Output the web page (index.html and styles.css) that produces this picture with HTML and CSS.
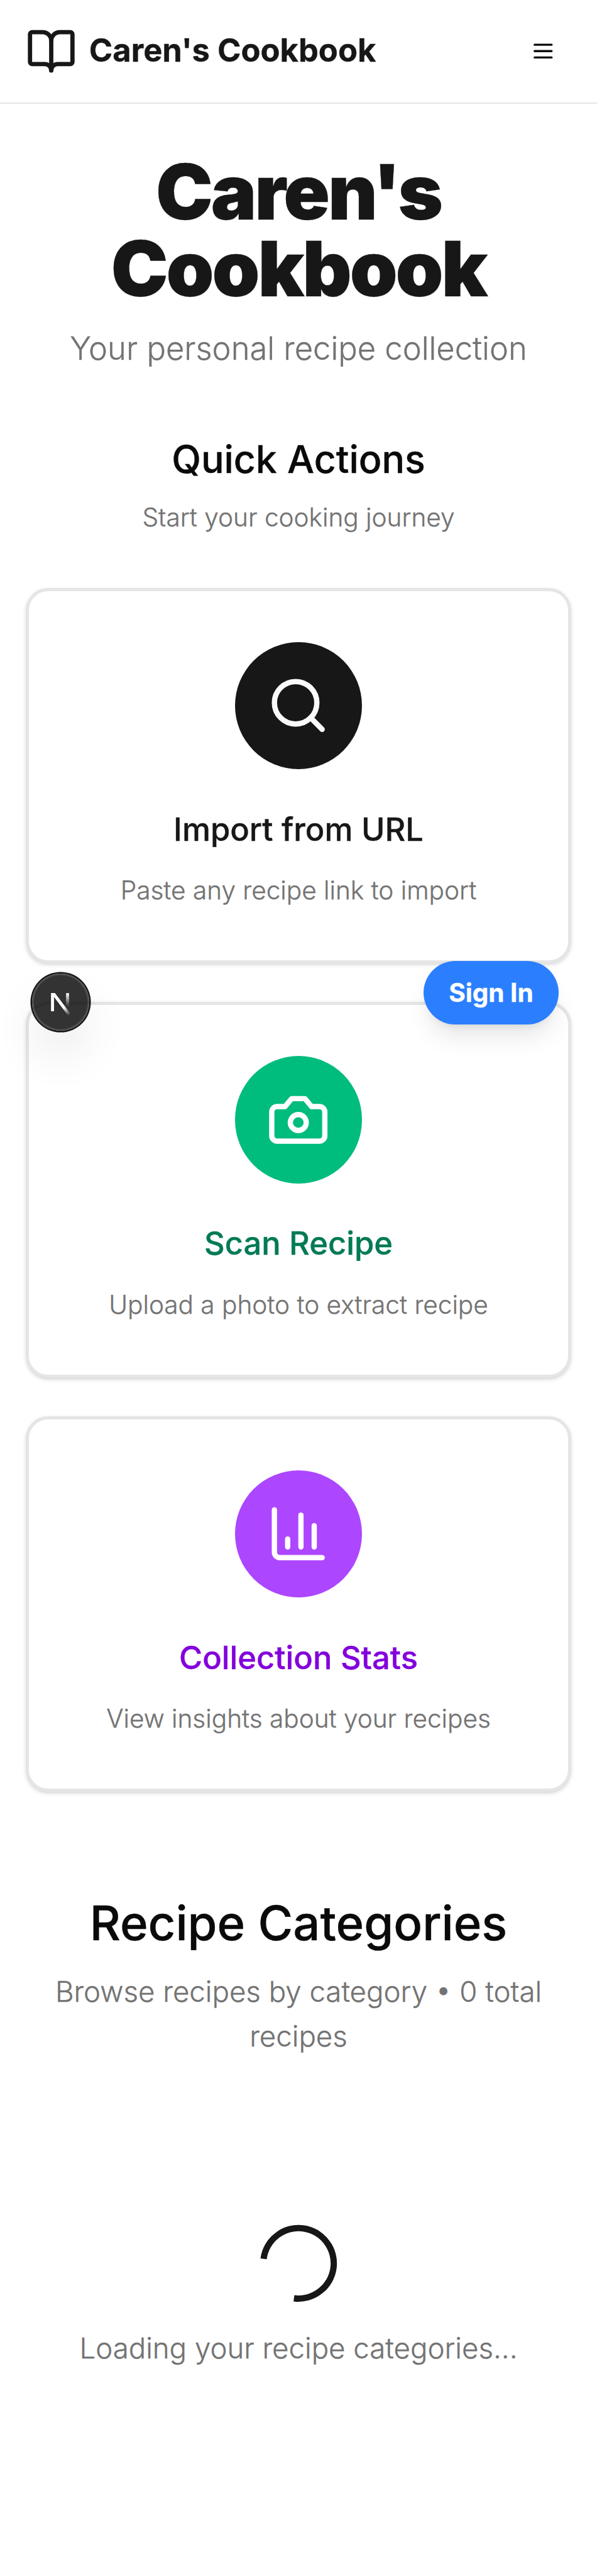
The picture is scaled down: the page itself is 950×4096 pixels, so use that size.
FILE: index.html
```html
<!DOCTYPE html>
<html lang="en">
<head>
<meta charset="utf-8">
<title>Caren's Cookbook</title>
<link rel="stylesheet" href="styles.css">
</head>
<body>
<header class="site-header">
  <a class="brand">
    <svg class="icon brand-icon" viewBox="0 0 24 24"><path d="M12 7v14"/><path d="M3 18a1 1 0 0 1-1-1V4a1 1 0 0 1 1-1h5a4 4 0 0 1 4 4 4 4 0 0 1 4-4h5a1 1 0 0 1 1 1v13a1 1 0 0 1-1 1h-6a3 3 0 0 0-3 3 3 3 0 0 0-3-3z"/></svg>
    <span class="brand-name">Caren's Cookbook</span>
  </a>
  <button class="menu-button" aria-label="Menu">
    <svg class="icon menu-icon" viewBox="0 0 24 24"><path d="M4 6h16M4 12h16M4 18h16"/></svg>
  </button>
</header>
<main class="content">
  <section class="hero">
    <h1>Caren's Cookbook</h1>
    <p>Your personal recipe collection</p>
  </section>
  <section class="quick">
    <h2>Quick Actions</h2>
    <p class="quick-note">Start your cooking journey</p>
    <div class="cards">
      <article class="card card-import">
        <div class="badge"><svg class="icon" viewBox="0 0 24 24"><path d="m21 21-4.34-4.34"/><circle cx="11" cy="11" r="8"/></svg></div>
        <h3>Import from URL</h3>
        <p>Paste any recipe link to import</p>
      </article>
      <article class="card card-scan">
        <div class="badge"><svg class="icon" viewBox="0 0 24 24"><path d="M14.5 4h-5L7 7H4a2 2 0 0 0-2 2v9a2 2 0 0 0 2 2h16a2 2 0 0 0 2-2V9a2 2 0 0 0-2-2h-3l-2.5-3z"/><circle cx="12" cy="13" r="3"/></svg></div>
        <h3>Scan Recipe</h3>
        <p>Upload a photo to extract recipe</p>
      </article>
      <article class="card card-stats">
        <div class="badge"><svg class="icon" viewBox="0 0 24 24"><path d="M3 3v16a2 2 0 0 0 2 2h16"/><path d="M18 17V9"/><path d="M13 17V5"/><path d="M8 17v-3"/></svg></div>
        <h3>Collection Stats</h3>
        <p>View insights about your recipes</p>
      </article>
    </div>
  </section>
  <section class="categories">
    <h2>Recipe Categories</h2>
    <p>Browse recipes by category • 0 total recipes</p>
    <div class="loading">
      <div class="spinner"></div>
      <p>Loading your recipe categories...</p>
    </div>
  </section>
</main>
<button class="sign-in">Sign In</button>
<div class="dev-badge">
  <svg viewBox="0 0 36 36" fill="none">
    <defs>
      <linearGradient id="diag" gradientUnits="userSpaceOnUse" x1="20" y1="21.3" x2="23.6" y2="26.05"><stop stop-color="#fff"/><stop offset="1" stop-color="#fff" stop-opacity="0"/></linearGradient>
      <linearGradient id="stem" gradientUnits="userSpaceOnUse" x1="22.3" y1="12.3" x2="22.3" y2="20.6"><stop stop-color="#fff"/><stop offset="1" stop-color="#fff" stop-opacity="0"/></linearGradient>
    </defs>
    <path d="M12.85 23.7V13.2H13.9L23.6 26.05" stroke="url(#diag)" stroke-width="1.9"/>
    <path d="M21.35 12.3h1.9v8.3h-1.9z" fill="url(#stem)"/>
  </svg>
</div>
</body>
</html>
```
FILE: styles.css
```css
html {
  /* 375-unit wide layout shown in a 950px window */
  font-size: calc(950px / 375 * 16);
}
* { box-sizing: border-box; margin: 0; padding: 0; }
body {
  position: relative;
  min-height: 4096px;
  background: #fff;
  color: #0a0a0a;
  font-family: Inter, "Liberation Sans", sans-serif;
  font-size: 1rem;
  line-height: 1.5;
  -webkit-text-stroke: 0.35px currentColor;
}
button { border: 0; background: none; font: inherit; color: inherit; }
.icon {
  display: block;
  fill: none;
  stroke: currentColor;
  stroke-width: 2;
  stroke-linecap: round;
  stroke-linejoin: round;
}
.site-header {
  display: flex;
  align-items: center;
  justify-content: space-between;
  height: 4.0625rem;
  padding: 0 1rem;
  border-bottom: 0.0625rem solid #e5e5e5;
}
.brand {
  display: flex;
  align-items: center;
  gap: 0.5rem;
  color: #171717;
  font-size: 1.25rem;
  line-height: 1.75rem;
  font-weight: 700;
}
.brand-name { padding-bottom: 1.6px; }
.brand-icon { width: 2rem; height: 2rem; }
.menu-button {
  display: grid;
  place-items: center;
  width: 2.25rem;
  height: 2.25rem;
}
.menu-icon { width: 1rem; height: 1rem; }
.content { padding: 2rem 1rem 0; text-align: center; }
.hero, .quick, .categories { display: flex; flex-direction: column; }
.hero h1 {
  margin: -1.4px 0 1.4px;
  color: #171717;
  font-size: 3rem;
  line-height: 1;
  font-weight: 900;
  letter-spacing: -0.025em;
}
.hero p {
  margin: calc(0.75rem - 0.7px) 0 0.7px;
  color: #737373;
  font-size: 1.25rem;
  line-height: 1.75rem;
  font-weight: 300;
}
.quick { padding-top: 2.5rem; }
.quick h2 {
  margin: -1.8px 0 1.8px;
  font-size: 1.5rem;
  line-height: 2rem;
  font-weight: 500;
}
.quick-note {
  margin: calc(0.5rem + 0.6px) 0 -0.6px;
  color: #737373;
  font-weight: 300;
}
.cards { display: grid; gap: 1.5rem; margin-top: 2rem; }
.card {
  display: flex;
  flex-direction: column;
  align-items: center;
  padding: 2rem;
  border: 0.125rem solid #e5e5e5;
  border-radius: 0.875rem;
  background: #fff;
  box-shadow: 0 0.0625rem 0.1875rem rgb(0 0 0 / 0.1), 0 0.0625rem 0.125rem -0.0625rem rgb(0 0 0 / 0.1);
}
.badge {
  display: grid;
  place-items: center;
  width: 5rem;
  height: 5rem;
  border-radius: 50%;
  color: #fff;
}
.badge .icon { width: 2.5rem; height: 2.5rem; }
.card h3 {
  margin: calc(1.5rem - 0.7px) 0 0.7px;
  font-size: 1.25rem;
  line-height: 1.75rem;
  font-weight: 500;
}
.card p {
  margin: calc(0.75rem + 0.6px) 0 -0.6px;
  color: #737373;
  font-weight: 300;
}
.card-import .badge { background: #171717; color: #fafafa; }
.card-import h3 { color: #171717; }
.card-scan .badge { background: #00bc7d; }
.card-scan h3 { color: #007a55; }
.card-stats .badge { background: #ad46ff; }
.card-stats h3 { color: #8200db; }
.categories { padding-top: 4rem; }
.categories h2 { font-size: 1.875rem; line-height: 2.25rem; font-weight: 500; }
.categories p {
  margin: calc(0.75rem - 1.2px) 0 1.2px;
  color: #737373;
  font-size: 1.125rem;
  line-height: 1.75rem;
  font-weight: 300;
}
.loading {
  display: flex;
  flex-direction: column;
  align-items: center;
  padding-top: 6.5rem;
}
.categories .loading p { margin-top: calc(1rem - 1.2px); }
.spinner {
  width: 3rem;
  height: 3rem;
  border: 0.25rem solid #171717;
  border-left-color: transparent;
  border-radius: 50%;
  transform: rotate(-37.6deg);
}
/* Floating controls over the page */
.sign-in {
  position: absolute;
  top: 37.6875rem;
  right: 1.5rem;
  height: 2.5rem;
  padding: 1.4px 1rem 0;
  border-radius: 1.25rem;
  background: #2b7fff;
  color: #fff;
  font-weight: 700;
  white-space: nowrap;
  box-shadow: 0 0.625rem 0.9375rem -0.1875rem rgb(0 0 0 / 0.1), 0 0.25rem 0.375rem -0.25rem rgb(0 0 0 / 0.1);
}
.dev-badge {
  position: absolute;
  top: 38.1875rem;
  left: 1.25rem;
  width: 2.25rem;
  height: 2.25rem;
  border-radius: 50%;
  background: rgb(0 0 0 / 0.8);
  box-shadow: 0 0 0 0.0625rem #171717, inset 0 0 0 0.0625rem rgb(255 255 255 / 0.14), 0 1rem 2rem -0.5rem rgb(0 0 0 / 0.24);
}
.dev-badge svg { display: block; width: 100%; height: 100%; }
```
